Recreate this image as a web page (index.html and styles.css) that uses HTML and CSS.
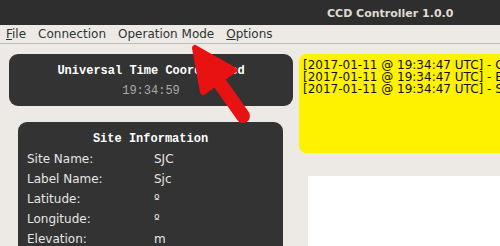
FILE: index.html
```html
<!DOCTYPE html>
<html lang="en">
<head>
  <meta charset="UTF-8" />
  <title>CCD Controller 1.0.0</title>
  <link rel="stylesheet" href="styles.css">
</head>
<body>
  <div class="titlebar">CCD Controller 1.0.0</div>
  <div class="menubar">
    <span class="menu-item"><u>F</u>ile</span>
    <span class="menu-item">Connection</span>
    <span class="menu-item">Operation Mode</span>
    <span class="menu-item"><u>O</u>ptions</span>
  </div>

  <div class="main">
    <div class="left">
      <div class="panel utc">
        <div class="panel-title">Universal Time Coordinated</div>
        <div class="clock">19:34:59</div>
      </div>
      <div class="panel site">
        <div class="panel-title">Site Information</div>
        <div class="info-grid">
          <span>Site Name:</span><span>SJC</span>
          <span>Label Name:</span><span>Sjc</span>
          <span>Latitude:</span><span>º</span>
          <span>Longitude:</span><span>º</span>
          <span>Elevation:</span><span>m</span>
        </div>
      </div>
    </div>
    <div class="right">
      <div class="log">
        <div>[2017-01-11 @ 19:34:47 UTC] - Connected to server</div>
        <div>[2017-01-11 @ 19:34:47 UTC] - Enabling camera</div>
        <div>[2017-01-11 @ 19:34:47 UTC] - Site loaded</div>
      </div>
      <div class="preview"></div>
    </div>
  </div>

  <!-- annotation arrow drawn over the window -->
  <svg class="arrow" width="500" height="246" viewBox="0 0 500 246">
    <line x1="219" y1="82" x2="243" y2="116" stroke="#e81212" stroke-width="14" stroke-linecap="round"/>
    <polygon points="195,48 203,92 234,70" fill="#e81212" stroke="#e81212" stroke-width="6" stroke-linejoin="round"/>
  </svg>
</body>
</html>
```

FILE: styles.css
```css
html, body {
  margin: 0;
  height: 100%;
  overflow: hidden;
}

body {
  background: #edeae5;
  font-family: "DejaVu Sans", sans-serif;
  position: relative;
}

.titlebar {
  height: 25px;
  box-sizing: border-box;
  padding: 3px 0 0 327px;
  line-height: 22px;
  background: #2e2e2e;
  color: #dfdbd2;
  font-size: 11px;
  font-weight: bold;
  white-space: nowrap;
}

.menubar {
  display: flex;
  height: 19px;
  padding-top: 1px;
  box-sizing: border-box;
  border-bottom: 1px solid #bebab4;
  font-size: 12px;
  line-height: 17px;
  color: #2e3436;
}

.menu-item {
  padding: 0 6px;
  white-space: nowrap;
}

.main {
  display: flex;
  gap: 6px;
  padding: 10px 0 0 9px;
}

.left {
  width: 284px;
  flex: none;
}

.panel {
  background: #333333;
  border-radius: 9px;
  color: #e6e6e6;
}

.panel-title {
  font-family: "Liberation Mono", monospace;
  font-weight: bold;
  font-size: 12px;
  line-height: 14px;
  color: #ffffff;
  text-align: center;
  white-space: nowrap;
}

.utc {
  height: 52px;
  box-sizing: border-box;
  padding-top: 10px;
}

.clock {
  margin-top: 6px;
  font-family: "Liberation Mono", monospace;
  font-size: 12px;
  line-height: 14px;
  color: #a8a8a8;
  text-align: center;
}

.site {
  margin: 16px 10px 0 9px;
  height: 140px;
  padding-top: 10px;
  box-sizing: border-box;
}

.info-grid {
  display: grid;
  grid-template-columns: 127px 1fr;
  margin-top: 3px;
  padding-left: 9px;
  font-size: 12px;
  line-height: 20px;
}

.right {
  flex: none;
  width: 300px;
}

.log {
  height: 99px;
  box-sizing: border-box;
  padding: 5px 0 0 4px;
  background: #fff200;
  border-radius: 7px;
  font-size: 12px;
  line-height: 12px;
  color: #111111;
  white-space: nowrap;
  overflow: hidden;
}

.preview {
  margin: 23px 0 0 9px;
  height: 100px;
  background: #ffffff;
}

.arrow {
  position: absolute;
  top: 0;
  left: 0;
  pointer-events: none;
}
```
